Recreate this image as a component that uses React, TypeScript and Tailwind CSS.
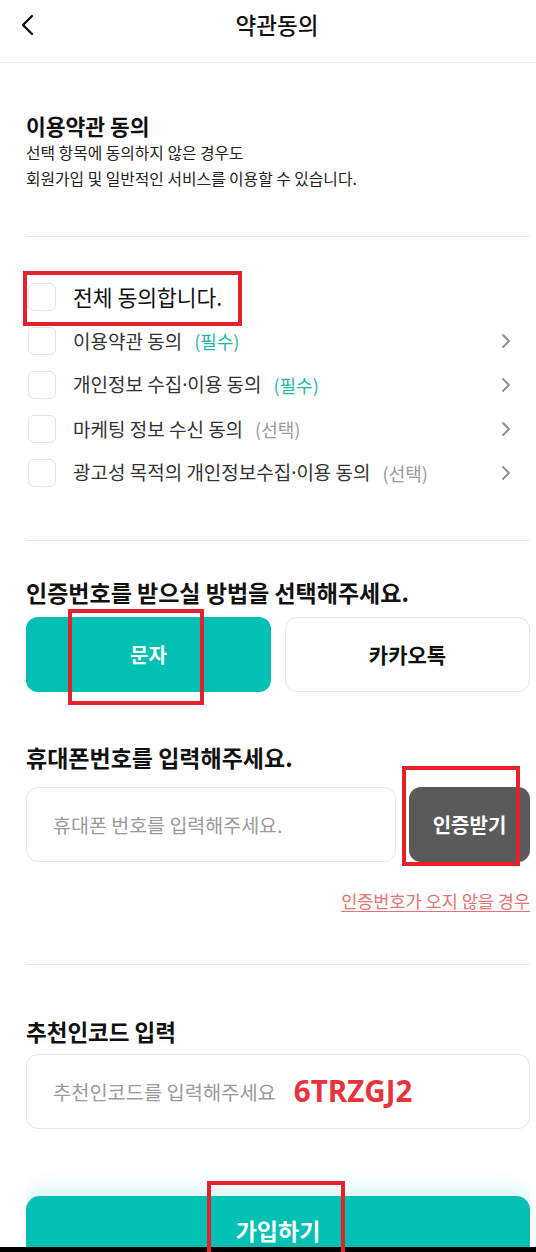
import React from "react";

const Chevron = () => (
  <svg width="12" height="16" viewBox="0 0 12 16" fill="none">
    <path d="M3 2l6 6-6 6" stroke="#8c8c99" strokeWidth="1.8" strokeLinecap="round" strokeLinejoin="round" />
  </svg>
);

const Box = () => (
  <div className="w-[28px] h-[28px] rounded-[6px] border border-[#e3e3e3] bg-white shrink-0" />
);

const Dot = () => <span style={{ fontFamily: '"Noto Sans", sans-serif' }}>·</span>;

const Label = ({ text }: { text: string }) => {
  const parts = text.split("·");
  return (
    <>
      {parts.map((p, i) => (
        <React.Fragment key={i}>
          {i > 0 && <Dot />}
          {p}
        </React.Fragment>
      ))}
    </>
  );
};

const Row = ({ label, tag, req }: { label: string; tag: string; req: boolean }) => (
  <div className="h-[44px] flex items-center pl-[2px] pr-[18px]">
    <Box />
    <span className="ml-[17px] text-[19px] text-[#333] whitespace-nowrap">
      <Label text={label} />
    </span>
    <span className={`ml-[12px] text-[18px] whitespace-nowrap ${req ? "text-[#1fb8ac]" : "text-[#9a9a9a]"}`}>{tag}</span>
    <div className="flex-1" />
    <Chevron />
  </div>
);

export default function App() {
  return (
    <div
      className="relative w-[536px] h-[1252px] overflow-hidden bg-white text-[#111]"
      style={{ fontFamily: '"Noto Sans CJK KR", "Noto Sans", sans-serif' }}
    >
      {/* header */}
      <div className="relative h-[63px] border-b border-[#e8e8e8] flex items-center justify-center">
        <div className="absolute left-[20px] top-[14px]">
          <svg width="16" height="22" viewBox="0 0 16 22" fill="none">
            <path d="M12 2L3 11l9 9" stroke="#111" strokeWidth="2.4" strokeLinecap="round" strokeLinejoin="round" />
          </svg>
        </div>
        <span className="ml-[18px] text-[22.5px] font-medium -mt-[13px]">약관동의</span>
      </div>

      <div className="pl-[26px] pr-[6px]">
        {/* section 1 */}
        <div className="pt-[49px]">
          <div className="text-[21.5px] leading-[28px] font-bold">이용약관 동의</div>
          <div className="text-[15.8px] leading-[26px] text-[#222]">
            선택 항목에 동의하지 않은 경우도
            <br />
            회원가입 및 일반적인 서비스를 이용할 수 있습니다.
          </div>
        </div>
        <div className="mt-[44px] h-px bg-[#e6e6e6]" />

        {/* agree rows */}
        <div className="mt-[38px]">
          <div className="h-[44px] flex items-center pl-[2px]">
            <Box />
            <span className="ml-[17px] text-[21.5px] text-[#111]">전체 동의합니다.</span>
          </div>
          <Row label="이용약관 동의" tag="(필수)" req />
          <Row label="개인정보 수집·이용 동의" tag="(필수)" req />
          <Row label="마케팅 정보 수신 동의" tag="(선택)" req={false} />
          <Row label="광고성 목적의 개인정보수집·이용 동의" tag="(선택)" req={false} />
        </div>
        <div className="mt-[45px] h-px bg-[#e6e6e6]" />

        {/* method */}
        <div className="mt-[37px] text-[23px] leading-[28px] font-bold whitespace-nowrap">
          인증번호를 받으실 방법을 선택해주세요.
        </div>
        <div className="mt-[11px] grid grid-cols-2 gap-[14px]">
          <div className="h-[75px] rounded-[12px] bg-[#00bfb3] flex items-center justify-center text-white text-[20px] font-semibold">
            문자
          </div>
          <div className="h-[75px] rounded-[12px] border border-[#e6e6e6] bg-white flex items-center justify-center text-[#111] text-[21px] font-bold">
            카카오톡
          </div>
        </div>

        {/* phone */}
        <div className="mt-[51px] text-[23px] leading-[28px] font-bold">휴대폰번호를 입력해주세요.</div>
        <div className="mt-[16px] flex gap-[13px]">
          <div className="flex-1 h-[75px] rounded-[12px] border border-[#e6e6e6] flex items-center pl-[26px] text-[19.5px] text-[#9a9a9a] whitespace-nowrap">
            휴대폰 번호를 입력해주세요.
          </div>
          <div className="w-[121px] h-[75px] rounded-[12px] bg-[#5a5a5a] flex items-center justify-center text-white text-[20px] font-semibold">
            인증받기
          </div>
        </div>
        <div className="mt-[27px] flex justify-end">
          <span className="text-[17.5px] leading-[24px] text-[#e57373] underline underline-offset-[3px]">
            인증번호가 오지 않을 경우
          </span>
        </div>
        <div className="mt-[51px] h-px bg-[#e6e6e6]" />

        {/* referral */}
        <div className="mt-[52px] text-[22.5px] leading-[28px] font-bold">추천인코드 입력</div>
        <div className="mt-[9px] h-[75px] rounded-[12px] border border-[#e6e6e6] flex items-center pl-[26px]">
          <span className="text-[19.8px] text-[#9a9a9a] whitespace-nowrap">추천인코드를 입력해주세요</span>
          <span
            className="ml-[18px] text-[29.5px] font-bold text-[#e8333d]"
            style={{ fontFamily: '"Open Sans", "Noto Sans", sans-serif' }}
          >
            6TRZGJ2
          </span>
        </div>

        {/* bottom button */}
        <div className="mt-[36px] pt-[31px] h-[82px] overflow-hidden">
          <div className="h-[80px] rounded-[14px] bg-[#00bfb3] shadow-[0_-6px_22px_rgba(0,191,200,0.18)] flex justify-center pt-[17px] text-white text-[23px] font-semibold">
            가입하기
          </div>
        </div>
      </div>
      <div className="absolute left-0 right-0 bottom-0 h-[5px] bg-black" />

      {/* red annotation boxes */}
      <div className="absolute left-[23px] top-[271px] w-[219px] h-[55px] border-[4px] border-[#e5212b]" />
      <div className="absolute left-[68px] top-[609px] w-[136px] h-[96px] border-[4px] border-[#e5212b]" />
      <div className="absolute left-[402px] top-[766px] w-[118px] h-[100px] border-[4px] border-[#e5212b]" />
      <div className="absolute left-[207px] top-[1181px] w-[138px] h-[80px] border-[4px] border-[#e5212b]" />
    </div>
  );
}
